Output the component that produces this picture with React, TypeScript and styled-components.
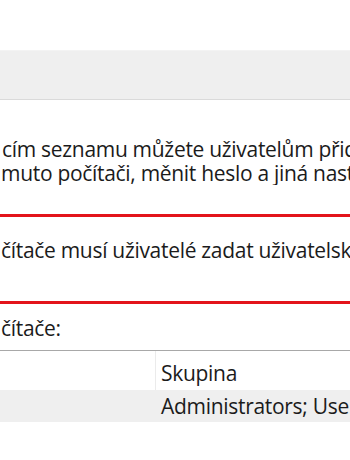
import React from "react";
import styled, { createGlobalStyle } from "styled-components";

const GlobalStyle = createGlobalStyle`
  html, body { margin: 0; padding: 0; background: #ffffff; }
  * { box-sizing: border-box; }
`;

const Page = styled.div`
  width: 350px;
  height: 460px;
  overflow: hidden;
  background: #ffffff;
  font-family: "Open Sans", "Noto Sans", "DejaVu Sans", sans-serif;
  font-size: 21px;
  line-height: 24px;
  letter-spacing: -0.3px;
  color: #1b1b1b;
  display: flex;
  flex-direction: column;
`;

const TopSpace = styled.div`
  height: 50px;
  flex: none;
`;

const Band = styled.div`
  height: 50px;
  flex: none;
  background: #efefef;
  border-top: 1px solid #f3f3f3;
  border-bottom: 1px solid #dadada;
`;

const Section = styled.div<{ $top: number; $bottom: number }>`
  padding: ${(p) => p.$top}px 0 ${(p) => p.$bottom}px 0;
  flex: none;
`;

const Line = styled.div<{ $indent?: number }>`
  white-space: nowrap;
  overflow: hidden;
  padding-left: ${(p) => p.$indent ?? 1}px;
`;

const RedRule = styled.div`
  height: 3px;
  flex: none;
  background: #e3141b;
`;

const Table = styled.div`
  flex: none;
  border-top: 1px solid #a8a8a8;
  display: flex;
  flex-direction: column;
`;

const Row = styled.div<{ $head?: boolean }>`
  display: grid;
  grid-template-columns: 155px 1fr;
  height: ${(p) => (p.$head ? 39 : 32)}px;
  background: ${(p) => (p.$head ? "#ffffff" : "#efefef")};
`;

const Cell = styled.div<{ $head?: boolean; $divider?: boolean }>`
  padding: ${(p) => (p.$head ? 10 : 4)}px 0 0 ${(p) => (p.$divider ? 5 : 6)}px;
  white-space: nowrap;
  overflow: hidden;
  border-left: ${(p) => (p.$divider ? "1px solid #ebebeb" : "none")};
`;

export default function App() {
  return (
    <>
      <GlobalStyle />
      <Page>
        <TopSpace />
        <Band />
        <Section $top={37} $bottom={29}>
          <Line $indent={2}>cím seznamu můžete uživatelům přidělit nebo</Line>
          <Line>muto počítači, měnit heslo a jiná nastavení.</Line>
        </Section>
        <RedRule />
        <Section $top={21} $bottom={39}>
          <Line>čítače musí uživatelé zadat uživatelské jméno a heslo.</Line>
        </Section>
        <RedRule />
        <Section $top={12} $bottom={10}>
          <Line>čítače:</Line>
        </Section>
        <Table>
          <Row $head>
            <Cell $head />
            <Cell $head $divider>Skupina</Cell>
          </Row>
          <Row>
            <Cell />
            <Cell>Administrators; Users</Cell>
          </Row>
        </Table>
      </Page>
    </>
  );
}
